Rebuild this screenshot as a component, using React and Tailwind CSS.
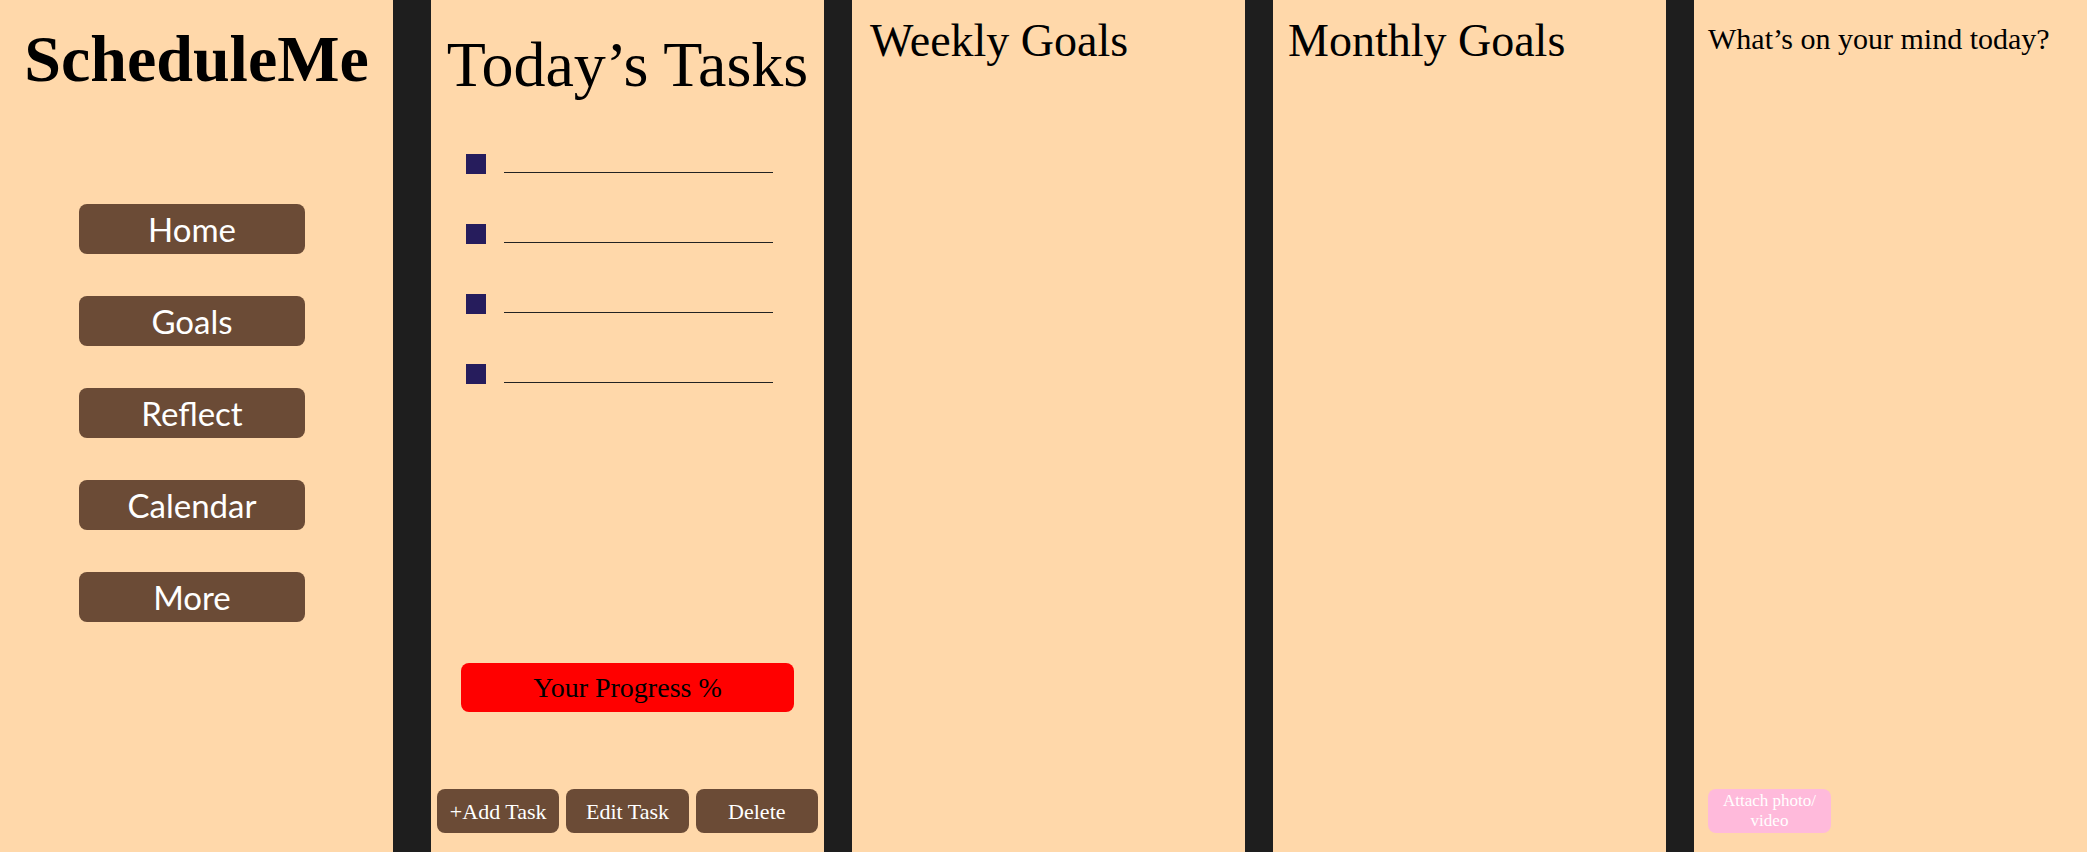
import React from 'react';

const navItems = ['Home', 'Goals', 'Reflect', 'Calendar', 'More'];
const tasks = [1, 2, 3, 4];

const serif = { fontFamily: '"Liberation Serif", "DejaVu Serif", serif' };

const App = () => {
  return (
    <div className="flex h-[852px] w-[2087px] bg-[#1e1e1e] overflow-hidden" style={serif}>
      {/* sidebar */}
      <div className="w-[393px] shrink-0 bg-[#ffd8aa] flex flex-col items-center">
        <h1 className="mt-[21px] text-[66px] leading-[76px] font-bold text-black">ScheduleMe</h1>
        <nav className="mt-[107px] self-start ml-[79px] flex flex-col gap-[42px]">
          {navItems.map((item) => (
            <button
              key={item}
              className="w-[226px] h-[50px] rounded-[8px] bg-[#6b4b36] text-white text-[33px] leading-none font-['Lato',sans-serif]"
            >
              {item}
            </button>
          ))}
        </nav>
      </div>

      <div className="w-[38px] shrink-0" />

      {/* today's tasks */}
      <div className="w-[393px] shrink-0 bg-[#ffd8aa] flex flex-col items-center px-[6px]">
        <h2 className="mt-[30px] text-[64px] leading-[70px] text-black">Today’s Tasks</h2>
        <ul className="mt-[54px] flex flex-col gap-[50px] self-start pl-[29px]">
          {tasks.map((t) => (
            <li key={t} className="flex items-start gap-[18px]">
              <span className="w-[20px] h-[20px] bg-[#261c5c]" />
              <span className="mt-[18px] w-[269px] h-[1px] bg-[#222]" />
            </li>
          ))}
        </ul>
        <div className="flex-1" />
        <div className="w-[333px] h-[49px] rounded-[8px] bg-[#ff0000] flex items-center justify-center text-[28px] text-black">
          Your Progress %
        </div>
        <div className="mt-[77px] mb-[19px] flex gap-[7px] w-full">
          {['+Add Task', 'Edit Task', 'Delete'].map((b) => (
            <button key={b} className="flex-1 h-[44px] rounded-[8px] bg-[#6b4b36] text-white text-[22px]">
              {b}
            </button>
          ))}
        </div>
      </div>

      <div className="w-[28px] shrink-0" />

      {/* weekly */}
      <div className="w-[393px] shrink-0 bg-[#ffd8aa] px-[18px] pt-[13px]">
        <h3 className="text-[46px] leading-[56px] text-black">Weekly Goals</h3>
      </div>

      <div className="w-[28px] shrink-0" />

      {/* monthly */}
      <div className="w-[393px] shrink-0 bg-[#ffd8aa] px-[15px] pt-[13px]">
        <h3 className="text-[46px] leading-[56px] text-black">Monthly Goals</h3>
      </div>

      <div className="w-[28px] shrink-0" />

      {/* journal */}
      <div className="w-[393px] shrink-0 bg-[#ffd8aa] px-[14px] flex flex-col">
        <p className="mt-[21px] text-[30px] leading-[36px] text-black">What’s on your mind today?</p>
        <div className="flex-1" />
        <button className="mb-[19px] w-[123px] h-[44px] rounded-[8px] bg-[#ffbadb] text-white text-[17px] leading-[20px]">
          Attach photo/
          <br />
          video
        </button>
      </div>
    </div>
  );
};

export default App;
